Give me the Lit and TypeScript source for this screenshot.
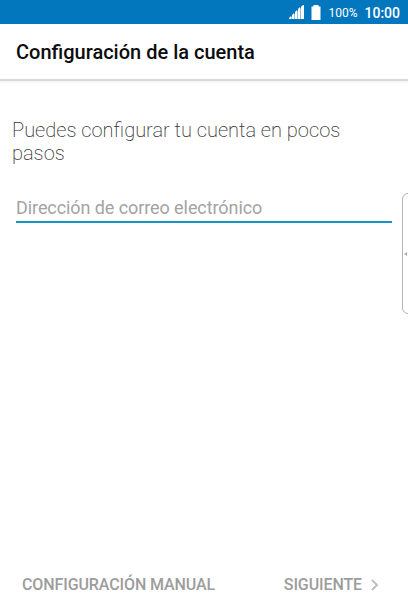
import {html, css, LitElement} from 'lit';
import {customElement, property} from 'lit/decorators.js';

@customElement('status-bar')
export class StatusBar extends LitElement {
  static styles = css`
    :host {
      display: flex;
      box-sizing: border-box;
      height: 24px;
      padding-right: 8px;
      align-items: center;
      justify-content: flex-end;
      background: #0277bd;
      color: #fff;
    }

    svg {
      display: block;
    }

    .signal {
      margin-right: 7px;
    }

    .battery {
      margin-right: 7px;
    }

    .level {
      margin-right: 7px;
      padding-top: 1px;
      font-size: 12px;
    }

    .time {
      padding-top: 1px;
      font-size: 14px;
      font-weight: 500;
    }
  `;

  @property() level = '100%';
  @property() time = '10:00';

  render() {
    return html`
      <svg class="signal" width="15" height="14" viewBox="0 0 15 14" fill="#fff">
        <path d="M0 14v-1l2-2v3zM3 14v-4l2-2v6zM6 14V7l2-2v9zM9 14V4l2-2v12zM12 14V2l2-2h1v14z" />
        <path d="M0 14L14.5 0v14z" opacity="0.55" />
      </svg>
      <svg class="battery" width="10" height="15" viewBox="0 0 10 15" fill="#fff">
        <path d="M2.5 0h5v1.5h2V15h-9V1.5h2z" />
      </svg>
      <span class="level">${this.level}</span>
      <span class="time">${this.time}</span>
    `;
  }
}

@customElement('app-root')
export class AppRoot extends LitElement {
  static styles = css`
    :host {
      display: flex;
      position: relative;
      flex-direction: column;
      height: 612px;
      overflow: hidden;
      background: #fff;
      font-family: Roboto, sans-serif;
    }

    header {
      display: flex;
      box-sizing: border-box;
      height: 55px;
      padding: 1px 16px 0;
      align-items: center;
      box-shadow: 0 2px 1px #d9d9d9, 0 3px 3px #f2f2f2;
    }

    h1 {
      margin: 0;
      font-size: 20px;
      font-weight: 500;
      line-height: 24px;
      color: #0c0c0c;
    }

    main {
      flex: 1;
      padding: 39.5px 16px 0;
    }

    p {
      margin: 0 0 0 -4px;
      font-size: 20px;
      font-weight: 200;
      line-height: 23.3px;
      color: #333;
    }

    input {
      display: block;
      box-sizing: border-box;
      width: 100%;
      height: 30px;
      margin-top: 28.2px;
      padding: 0;
      border: none;
      border-bottom: 2px solid #1796c6;
      outline: none;
      background: none;
      font: 400 18px Roboto, sans-serif;
      letter-spacing: -0.08px;
    }

    input::placeholder {
      color: #a3a3a3;
      opacity: 1;
    }

    footer {
      display: flex;
      height: 55px;
      padding: 0 29px 0 22px;
      align-items: center;
      justify-content: space-between;
    }

    button {
      display: flex;
      padding: 0;
      border: none;
      background: none;
      align-items: center;
      gap: 9px;
      color: #9c9c9c;
      font: 500 16px Roboto, sans-serif;
      letter-spacing: -0.1px;
    }

    .edge-handle {
      position: absolute;
      top: 193px;
      right: -6px;
      box-sizing: border-box;
      width: 12px;
      height: 121px;
      border: 1px solid #b4b4b4;
      border-radius: 6px;
    }

    .edge-handle svg {
      display: block;
      margin: 58px 0 0 1px;
    }
  `;

  render() {
    return html`
      <status-bar></status-bar>
      <header><h1>Configuración de la cuenta</h1></header>
      <main>
        <p>Puedes configurar tu cuenta en pocos pasos</p>
        <input type="email" placeholder="Dirección de correo electrónico" />
      </main>
      <footer>
        <button>CONFIGURACIÓN MANUAL</button>
        <button>
          SIGUIENTE
          <svg width="8" height="12" viewBox="0 0 8 12" fill="none">
            <path d="M1 1l5 5-5 5" stroke="#c0c0c0" stroke-width="2" />
          </svg>
        </button>
      </footer>
      <div class="edge-handle">
        <svg width="3" height="4" viewBox="0 0 3 4">
          <path d="M0 2l3-2v4z" fill="#aaa" />
        </svg>
      </div>
    `;
  }
}
